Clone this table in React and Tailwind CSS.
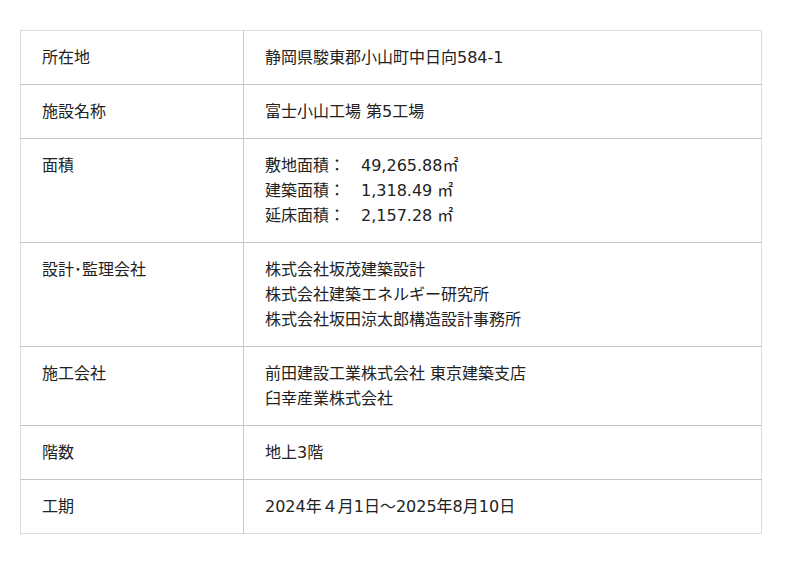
const rows = [
  { label: '所在地', lines: ['静岡県駿東郡小山町中日向584-1'] },
  { label: '施設名称', lines: ['富士小山工場 第5工場'] },
  {
    label: '面積',
    lines: ['敷地面積：　49,265.88㎡', '建築面積：　1,318.49 ㎡', '延床面積：　2,157.28 ㎡'],
  },
  {
    label: '設計･監理会社',
    lines: ['株式会社坂茂建築設計', '株式会社建築エネルギー研究所', '株式会社坂田涼太郎構造設計事務所'],
  },
  { label: '施工会社', lines: ['前田建設工業株式会社 東京建築支店', '臼幸産業株式会社'] },
  { label: '階数', lines: ['地上3階'] },
  { label: '工期', lines: ['2024年４月1日～2025年8月10日'] },
]

const App = () => {
  return (
    <div
      className="min-h-[564px] bg-white pt-[30px] px-[20px] text-[16px] leading-[25px] text-[#222]"
      style={{ fontFamily: '"DejaVu Sans", "Noto Sans CJK JP", sans-serif' }}
    >
      <table className="w-[742px] border-collapse border border-[#dcdcdc]">
        <tbody>
          {rows.map((row, index) => (
            <tr key={index} className="border-b border-[#c4c4c4] last:border-[#dcdcdc]">
              <td className="w-[223px] align-top py-[14px] pl-[21px] pr-3 border-r border-[#c8c8c8]">
                {row.label}
              </td>
              <td className="align-top py-[14px] pl-[21px] pr-3">
                {row.lines.map((line, i) => (
                  <div key={i} className="whitespace-pre">{line}</div>
                ))}
              </td>
            </tr>
          ))}
        </tbody>
      </table>
    </div>
  )
}

export default App
